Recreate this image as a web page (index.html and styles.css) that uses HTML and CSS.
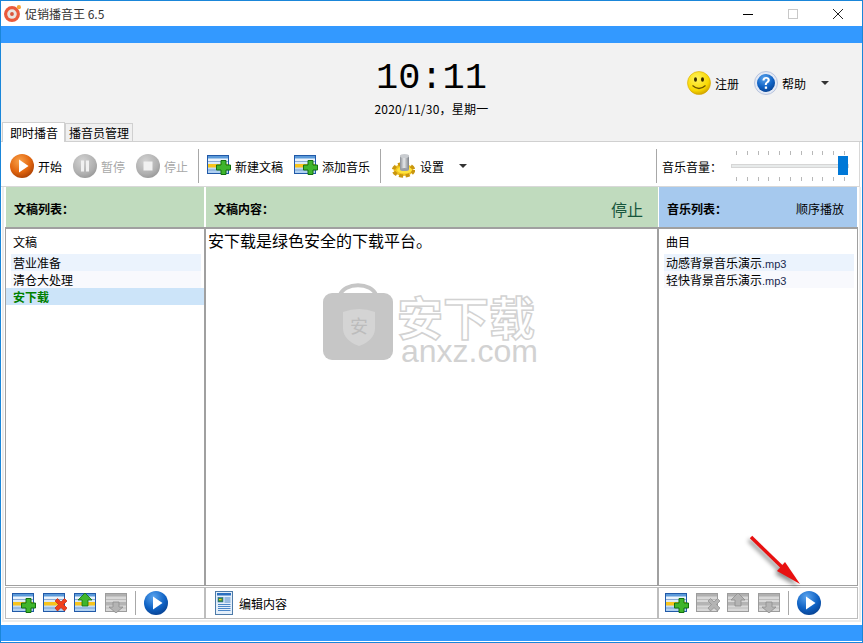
FILE: index.html
```html
<!DOCTYPE html>
<html lang="zh-CN">
<head>
    <meta charset="UTF-8">
    <meta name="viewport" content="width=device-width, initial-scale=1.0">
    <title>促销播音王 6.5</title>
    <link rel="stylesheet" href="styles.css">
</head>
<body>
    <!-- 图标定义 -->
    <svg class="sprite" xmlns="http://www.w3.org/2000/svg">
        <defs>
            <radialGradient id="gOrange" cx="40%" cy="30%" r="75%">
                <stop offset="0" stop-color="#f9a24a"/><stop offset=".6" stop-color="#e2660f"/><stop offset="1" stop-color="#a83f04"/>
            </radialGradient>
            <radialGradient id="gGrey" cx="40%" cy="30%" r="75%">
                <stop offset="0" stop-color="#d2d2d2"/><stop offset=".7" stop-color="#b0b0b0"/><stop offset="1" stop-color="#969696"/>
            </radialGradient>
            <radialGradient id="gBlue" cx="40%" cy="25%" r="80%">
                <stop offset="0" stop-color="#5aa4ee"/><stop offset=".6" stop-color="#0f62c4"/><stop offset="1" stop-color="#07408f"/>
            </radialGradient>
            <radialGradient id="gSmile" cx="40%" cy="30%" r="75%">
                <stop offset="0" stop-color="#fff35c"/><stop offset=".7" stop-color="#f9d800"/><stop offset="1" stop-color="#c99a00"/>
            </radialGradient>
            <linearGradient id="gRows" x1="0" y1="0" x2="0" y2="1">
                <stop offset="0" stop-color="#fff"/><stop offset="1" stop-color="#a9cdf0"/>
            </linearGradient>
            <linearGradient id="gCyl" x1="0" y1="0" x2="1" y2="0">
                <stop offset="0" stop-color="#8b8f96"/><stop offset=".45" stop-color="#e6e8ea"/><stop offset="1" stop-color="#7d8188"/>
            </linearGradient>
        </defs>
        <symbol id="play" viewBox="0 0 24 24">
            <circle cx="12" cy="12" r="12" fill="var(--ball)"/>
            <path d="M9 5.500 18.500 12 9 18.500Z" fill="#fff"/>
        </symbol>
        <symbol id="pause" viewBox="0 0 24 24">
            <circle cx="12" cy="12" r="12" fill="url(#gGrey)"/>
            <path d="M8 6.500h3v11H8zM13 6.500h3v11h-3z" fill="#f1f1f1"/>
        </symbol>
        <symbol id="stop" viewBox="0 0 24 24">
            <circle cx="12" cy="12" r="12" fill="url(#gGrey)"/>
            <path d="M7.500 7.500h9v9h-9z" fill="#f1f1f1"/>
        </symbol>
        <symbol id="table" viewBox="0 0 24 20">
            <rect x=".5" y=".5" width="21" height="18" fill="var(--rows)" stroke="var(--frame)"/>
            <rect x="1" y="1" width="20" height="2.500" fill="var(--head)"/>
            <rect x="1" y="6" width="20" height="1" fill="var(--frame)" opacity=".45"/>
            <rect x="1" y="9" width="20" height="3.500" fill="var(--stripe)"/>
            <rect x="1" y="14.500" width="20" height="1" fill="var(--frame)" opacity=".45"/>
        </symbol>
        <symbol id="plus" viewBox="0 0 24 20">
            <path d="M14 5.500h5v4.500h4.500v5H19v4.500h-5V15H9.500v-5H14z" fill="#3fb52c" stroke="#13700f"/>
        </symbol>
        <symbol id="cross" viewBox="0 0 24 20">
            <path d="M12 8 14.500 5.500l3.500 3.500 3.500-3.500L24 8l-3.500 3.500L24 15l-2.500 3-3.500-3.500-3.500 3.500-2.500-3 3.500-3.500z" fill="var(--mark)" stroke="var(--markline)" stroke-width=".7"/>
        </symbol>
        <symbol id="up" viewBox="0 0 24 20">
            <path d="M11 0 18 7h-4v6H8V7H4z" fill="var(--mark)" stroke="var(--markline)" stroke-width=".8"/>
        </symbol>
        <symbol id="down" viewBox="0 0 24 20">
            <path d="M8 9h6v5h4l-7 6-7-6h4z" fill="var(--mark)" stroke="var(--markline)" stroke-width=".8"/>
        </symbol>
        <symbol id="gear" viewBox="0 0 24 24">
            <ellipse cx="12.500" cy="16" rx="10" ry="6" fill="#f2c41e" stroke="#c9960f" stroke-width="3.500" stroke-dasharray="4 2.500"/>
            <ellipse cx="13.500" cy="16" rx="7.500" ry="3.500" fill="#ffe43c"/>
            <rect x="9" y="1.500" width="9" height="14" fill="url(#gCyl)"/>
            <ellipse cx="13.500" cy="2" rx="4.500" ry="2" fill="#c9ccd0"/>
            <ellipse cx="13.500" cy="15.500" rx="4.500" ry="1.500" fill="#9a9da3"/>
        </symbol>
        <symbol id="smile" viewBox="0 0 24 24">
            <circle cx="12" cy="12" r="11.500" fill="url(#gSmile)" stroke="#d9a900" stroke-width=".6"/>
            <ellipse cx="8.500" cy="8.500" rx="1.500" ry="2.200" fill="#3a2c00"/>
            <ellipse cx="15.500" cy="8.500" rx="1.500" ry="2.200" fill="#3a2c00"/>
            <path d="M5.500 14.500q6.500 6 13 0" fill="none" stroke="#6d5500" stroke-width="1.200"/>
        </symbol>
        <symbol id="help" viewBox="0 0 24 24">
            <circle cx="12" cy="12" r="11.500" fill="#e3e9f5" stroke="#b9c5de"/>
            <circle cx="12" cy="12" r="9" fill="url(#gBlue)"/>
            <path d="M8.500 9.500c0-2.500 1.800-3.500 3.700-3.500s3.600 1 3.600 3c0 2.800-3 2.600-3 5h-2c0-3.300 2.800-3.300 2.800-5 0-.8-.6-1.300-1.400-1.300-1 0-1.600.6-1.700 1.800z" fill="#fff"/>
            <rect x="10.800" y="15.500" width="2.300" height="2.300" fill="#fff"/>
        </symbol>
        <symbol id="doc" viewBox="0 0 18 24">
            <rect x=".5" y=".5" width="17" height="23" fill="#e4effa" stroke="#4d7aa8"/>
            <rect x="2" y="2" width="14" height="2.500" fill="#2a6fc0"/>
            <rect x="3" y="6.500" width="5" height="4.500" fill="#3a8f3a" stroke="#1f5fa8" stroke-width=".6"/>
            <rect x="4" y="8" width="2.500" height="1.200" fill="#f6c21a"/>
            <path d="M9.500 7h6M9.500 9h6M9.500 11h6M3 13.500h12.500M3 15.500h12.500M3 17.500h12.500M3 19.500h12.500" stroke="#4a86c8"/>
        </symbol>
    </svg>

    <div class="window">
        <div class="titlebar">
            <svg class="app-logo" viewBox="0 0 16 16">
                <circle cx="7.500" cy="8.500" r="7.500" fill="#ea5a3c"/>
                <circle cx="7.500" cy="8.500" r="4.500" fill="#e9e4df"/>
                <circle cx="7.500" cy="8.500" r="1.800" fill="#d8553b"/>
                <circle cx="14" cy="2" r="2" fill="#f6a53a"/>
            </svg>
            <span class="app-name">促销播音王 6.5</span>
            <div class="win-btns">
                <svg class="win-btn" viewBox="0 0 12 12"><path d="M1 6.500h10" stroke="#000"/></svg>
                <svg class="win-btn" viewBox="0 0 12 12"><rect x="1.500" y="1.500" width="9" height="9" fill="none" stroke="#c8c8c8"/></svg>
                <svg class="win-btn" viewBox="0 0 12 12"><path d="M1 1l10 10M11 1 1 11" stroke="#222"/></svg>
            </div>
        </div>
        <div class="band"></div>

        <div class="head">
            <div class="clock">
                <div class="clock-time">10:11</div>
                <div class="clock-date">2020/11/30，星期一</div>
            </div>
            <div class="head-links">
                <svg class="ico"><use href="#smile"/></svg><span class="link-text">注册</span>
                <svg class="ico help-ico"><use href="#help"/></svg><span class="link-text">帮助</span>
                <span class="caret caret-help"></span>
            </div>
        </div>

        <div class="tabs">
            <div class="tab tab-on">即时播音</div>
            <div class="tab">播音员管理</div>
        </div>

        <div class="toolbar">
            <div class="tool"><svg class="ico orange"><use href="#play"/></svg>开始</div>
            <div class="tool tool-off"><svg class="ico"><use href="#pause"/></svg>暂停</div>
            <div class="tool tool-off"><svg class="ico"><use href="#stop"/></svg>停止</div>
            <div class="sep"></div>
            <div class="tool"><span class="tbl on"><svg><use href="#table"/></svg><svg><use href="#plus"/></svg></span>新建文稿</div>
            <div class="tool"><span class="tbl on"><svg><use href="#table"/></svg><svg><use href="#plus"/></svg></span>添加音乐</div>
            <div class="sep"></div>
            <div class="tool tool-gear"><svg class="ico"><use href="#gear"/></svg>设置</div>
            <span class="caret caret-set"></span>
            <div class="sep sep-vol"></div>
            <div class="vol-label">音乐音量<span class="colon">：</span></div>
            <div class="slider">
                <div class="slider-track"></div>
                <div class="slider-thumb"></div>
            </div>
        </div>

        <div class="panels">
            <!-- 文稿列表 -->
            <div class="panel panel-left">
                <div class="panel-head green"><b>文稿列表<span class="colon">：</span></b></div>
                <div class="panel-list">
                    <div class="list-title">文稿</div>
                    <div class="row row-a">营业准备</div>
                    <div class="row row-b">清仓大处理</div>
                    <div class="row row-sel">安下载</div>
                </div>
                <div class="panel-foot">
                    <span class="tbl on"><svg><use href="#table"/></svg><svg><use href="#plus"/></svg></span>
                    <span class="tbl on"><svg><use href="#table"/></svg><svg class="red"><use href="#cross"/></svg></span>
                    <span class="tbl on"><svg><use href="#table"/></svg><svg class="lime"><use href="#up"/></svg></span>
                    <span class="tbl off"><svg><use href="#table"/></svg><svg class="grey"><use href="#down"/></svg></span>
                    <div class="sep sep-foot"></div>
                    <svg class="ico blue"><use href="#play"/></svg>
                </div>
            </div>

            <!-- 文稿内容 -->
            <div class="panel panel-mid">
                <div class="panel-head green"><b>文稿内容<span class="colon">：</span></b><span class="status">停止</span></div>
                <div class="panel-list content">
                    安下载是绿色安全的下载平台。
                    <div class="watermark">
                        <svg class="wm-bag" viewBox="0 0 70 80">
                            <path d="M17 15C21 2 49 2 53 15" fill="none" stroke="#c6c6c6" stroke-width="4"/>
                            <rect x="0" y="13" width="70" height="67" rx="9" fill="#c6c6c6"/>
                            <path d="M20 32q16-6 32 0v16q0 12-16 18-16-6-16-18z" fill="#d4d4d4"/>
                        </svg>
                        <span class="wm-bag-text">安</span>
                        <div class="wm-text">
                            <div class="wm-cn">安下载</div>
                            <div class="wm-en">anxz.com</div>
                        </div>
                    </div>
                </div>
                <div class="panel-foot">
                    <svg class="doc-ico"><use href="#doc"/></svg><span class="foot-text">编辑内容</span>
                </div>
            </div>

            <!-- 音乐列表 -->
            <div class="panel panel-right">
                <div class="panel-head blue-head"><b>音乐列表<span class="colon">：</span></b><span class="order">顺序播放</span></div>
                <div class="panel-list">
                    <div class="list-title">曲目</div>
                    <div class="row row-a">动感背景音乐演示<span class="ext">.mp3</span></div>
                    <div class="row row-b">轻快背景音乐演示<span class="ext">.mp3</span></div>
                </div>
                <div class="panel-foot">
                    <span class="tbl on"><svg><use href="#table"/></svg><svg><use href="#plus"/></svg></span>
                    <span class="tbl off"><svg><use href="#table"/></svg><svg class="grey"><use href="#cross"/></svg></span>
                    <span class="tbl off"><svg><use href="#table"/></svg><svg class="grey"><use href="#up"/></svg></span>
                    <span class="tbl off"><svg><use href="#table"/></svg><svg class="grey"><use href="#down"/></svg></span>
                    <div class="sep sep-foot"></div>
                    <svg class="ico blue"><use href="#play"/></svg>
                </div>
            </div>
        </div>

        <div class="statusbar"></div>

        <!-- 红色箭头标注 -->
        <svg class="arrow" viewBox="0 0 60 60">
            <path d="M2 3 34 34" stroke="#e81010" stroke-width="3.500" fill="none"/>
            <path d="M51 50 36 28 28 37Z" fill="#e81010"/>
        </svg>
    </div>
</body>
</html>
```

FILE: styles.css
```css
* {
    box-sizing: border-box;
}
body {
    margin: 0;
    font-family: "Noto Sans CJK SC", "Liberation Sans", sans-serif;
    font-size: 12px;
    color: #000;
    background: #fff;
}
.sprite {
    position: absolute;
    width: 0;
    height: 0;
}
.window {
    position: relative;
    display: flex;
    flex-direction: column;
    width: 863px;
    height: 643px;
    border: 1px solid #1a86d9;
    background: #fff;
    overflow: hidden;
}
.colon {
    font-family: "Noto Sans CJK TC", sans-serif;
}

/* 标题栏 */
.titlebar {
    display: flex;
    align-items: center;
    height: 25px;
    padding-left: 3px;
    background: #fff;
    flex: none;
}
.app-logo {
    width: 17px;
    height: 17px;
}
.app-name {
    margin-left: 4px;
    color: #333;
    font-size: 12px;
}
.win-btns {
    display: flex;
    gap: 33px;
    margin-left: auto;
    margin-right: 18px;
}
.win-btn {
    width: 12px;
    height: 12px;
}
.band {
    flex: none;
    height: 17px;
    background: #3399ff;
}

/* 时钟 */
.head {
    position: relative;
    flex: none;
    display: flex;
    justify-content: center;
    height: 79px;
    background: #f2f2f2;
}
.clock {
    text-align: center;
}
.clock-time {
    margin-top: 14px;
    font-family: "Liberation Mono", monospace;
    font-size: 37px;
    line-height: 42px;
}
.clock-date {
    margin-top: 2px;
    line-height: 16px;
    letter-spacing: .25px;
}
.head-links {
    position: absolute;
    top: 28px;
    left: 686px;
    display: flex;
    align-items: center;
}
.ico {
    display: block;
    flex: none;
    width: 24px;
    height: 24px;
}
.link-text {
    margin-left: 4px;
}
.help-ico {
    margin-left: 15px;
}
.caret {
    display: block;
    flex: none;
    width: 0;
    height: 0;
    border-left: 4px solid transparent;
    border-right: 4px solid transparent;
    border-top: 4px solid #333;
}
.caret-help {
    margin-left: 15px;
}

/* 选项卡 */
.tabs {
    flex: none;
    display: flex;
    align-items: flex-end;
    height: 20px;
    padding-left: 1px;
    background: #f2f2f2;
    border-bottom: 1px solid #d0d0d0;
}
.tab {
    height: 18px;
    padding: 0 3px;
    line-height: 18px;
    background: #f0f0f0;
    border: 1px solid #d0d0d0;
    border-bottom: 0;
}
.tab-on {
    height: 20px;
    margin-bottom: -1px;
    padding: 0 6px 0 7px;
    line-height: 19px;
    background: #fff;
}

/* 工具栏 */
.toolbar {
    flex: none;
    display: flex;
    align-items: center;
    height: 45px;
    padding: 4px 0 0 9px;
    background: #fff;
    border-bottom: 1px solid #d8d8d8;
    border-right: 1px solid #d8d8d8;
    margin-right: 2px;
}
.tool {
    display: flex;
    align-items: center;
    gap: 4px;
    margin-right: 11px;
    white-space: nowrap;
}
.tool-off {
    color: #a8a8a8;
}
.tool-gear {
    gap: 5px;
    margin-left: 2px;
    margin-right: 15px;
}
.sep {
    flex: none;
    width: 1px;
    height: 34px;
    margin: 0 8px 0 -1px;
    background: #a8a8a8;
}
.sep-vol {
    margin-left: 189px;
    margin-right: 5px;
}
.vol-label {
    white-space: nowrap;
}
.orange {
    --ball: url(#gOrange);
}
.blue {
    --ball: url(#gBlue);
}
.tool .tbl {
    margin-top: -2px;
}
.tbl {
    position: relative;
    display: block;
    flex: none;
    width: 24px;
    height: 20px;
}
.tbl svg {
    position: absolute;
    left: 0;
    top: 0;
    width: 24px;
    height: 20px;
}
.on {
    --frame: #2159a8;
    --rows: url(#gRows);
    --head: #5b9ad9;
    --stripe: #f8c41c;
}
.off {
    --frame: #9c9c9c;
    --rows: #d8d8d8;
    --head: #b0b0b0;
    --stripe: #b4b4b4;
}
.red {
    --mark: #f0401c;
    --markline: #c02a10;
}
.lime {
    --mark: #3fb52c;
    --markline: #13700f;
}
.grey {
    --mark: #b4b4b4;
    --markline: #8e8e8e;
}

/* 音量滑块 */
.slider {
    position: relative;
    flex: none;
    width: 118px;
    height: 30px;
    margin-left: 9px;
    background-image: repeating-linear-gradient(90deg, #b8b8b8 0, #b8b8b8 1px, transparent 1px, transparent 10.8px), repeating-linear-gradient(90deg, #b8b8b8 0, #b8b8b8 1px, transparent 1px, transparent 10.8px);
    background-size: 109px 4px, 109px 4px;
    background-position: 5px 0, 5px 26px;
    background-repeat: no-repeat;
}
.slider-track {
    position: absolute;
    left: 0;
    right: 0;
    top: 13px;
    height: 4px;
    background: #e7eaea;
    border: 1px solid #d6d6d6;
}
.slider-thumb {
    position: absolute;
    left: 107px;
    top: 5px;
    width: 10px;
    height: 19px;
    background: #0078d7;
}

/* 三栏 */
.panels {
    flex: none;
    display: grid;
    grid-template-columns: 200px 453px 200px;
    width: 859px;
    height: 435px;
    margin-left: 1px;
    padding-left: 1px;
    border: 2px solid #ececec;
    border-top: 0;
}
.panel {
    display: flex;
    flex-direction: column;
    min-width: 0;
}
.panel-head {
    flex: none;
    display: flex;
    align-items: center;
    justify-content: space-between;
    height: 40px;
    margin: 0 1px;
    padding: 3px 8px 0 8px;
}
.panel-mid .panel-head {
    margin-right: 0;
    padding-right: 15px;
}
.green {
    background: #c0dbbe;
}
.blue-head {
    background: #a6c9ee;
    padding-right: 13px;
}
.status {
    font-size: 16px;
    color: #17563c;
}
.panel-list {
    position: relative;
    flex: none;
    height: 359px;
    border: 1px solid #a0a0a0;
    border-top-width: 2px;
    background: #fff;
}
.list-title {
    height: 25px;
    padding: 4px 0 0 7px;
    line-height: 17px;
}
.row {
    height: 17px;
    margin: 0 3px 0 5px;
    padding-left: 2px;
    line-height: 17px;
}
.row-a {
    background: #ebf3fd;
}
.row-b {
    background: #f8f9fd;
}
.row-sel {
    margin: 0;
    padding-left: 7px;
    font-weight: bold;
    color: #008000;
    background: #cce4f9;
}
.ext {
    font-family: "Liberation Sans", sans-serif;
    font-size: 11px;
    color: #1a2a50;
}
.content {
    padding: 0 0 0 2px;
    font-size: 16px;
    line-height: 22px;
}
.panel-foot {
    flex: none;
    display: flex;
    align-items: center;
    gap: 7px;
    height: 32px;
    margin-top: 1px;
    padding-left: 6px;
    border: 1px solid #bdbdbd;
}
.panel-foot .sep-foot {
    height: 24px;
    margin: 0 1px 0 -1px;
}
.doc-ico {
    width: 18px;
    height: 24px;
    margin-left: 3px;
}
.foot-text {
    margin-left: -1px;
}
.statusbar {
    flex: none;
    height: 16px;
    margin-top: 3px;
    background: #3399ff;
}

/* 水印 */
.watermark {
    position: absolute;
    left: 117px;
    top: 51px;
    display: flex;
    align-items: flex-start;
    pointer-events: none;
}
.wm-bag {
    display: block;
    width: 70px;
    height: 80px;
}
.wm-bag-text {
    position: absolute;
    left: 27px;
    top: 33px;
    font-size: 18px;
    line-height: 24px;
    color: #bcbcbc;
}
.wm-text {
    margin-left: 4px;
    margin-top: 13px;
}
.wm-cn {
    width: 140px;
    height: 44px;
    font-size: 46px;
    font-weight: bold;
    line-height: 44px;
    color: #fff;
    -webkit-text-stroke: 1.5px #d2d2d2;
}
.wm-en {
    height: 28px;
    margin-left: 4px;
    font-family: "Liberation Sans", sans-serif;
    font-size: 32px;
    line-height: 28px;
    color: #d2d2d2;
}

.arrow {
    position: absolute;
    left: 748px;
    top: 533px;
    width: 60px;
    height: 60px;
    filter: drop-shadow(-2px 3px 2px rgba(0, 0, 0, .45));
}
```
